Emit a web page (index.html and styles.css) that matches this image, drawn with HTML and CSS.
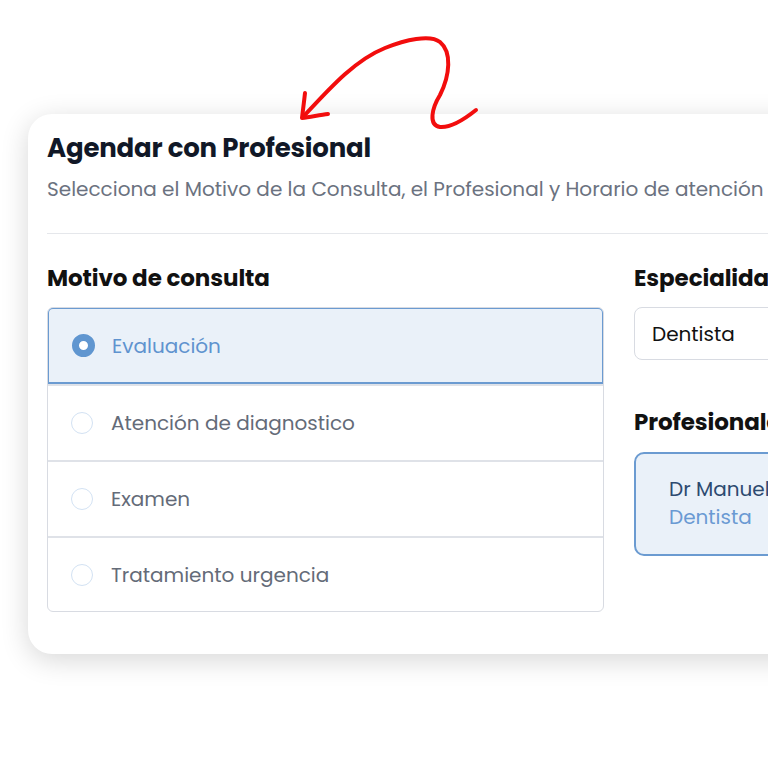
FILE: index.html
```html
<!DOCTYPE html>
<html lang="es">
<head>
<meta charset="utf-8">
<link rel="stylesheet" href="styles.css">
</head>
<body>
<div class="page">
  <div class="card">
    <h1 class="title">Agendar con Profesional</h1>
    <p class="subtitle">Selecciona el Motivo de la Consulta, el Profesional y Horario de atención</p>
    <hr class="divider">
    <div class="columns">
      <div class="col-left">
        <h2 class="section">Motivo de consulta</h2>
        <div class="list">
          <div class="row selected"><span class="radio on"></span><span class="label">Evaluación</span></div>
          <div class="row"><span class="radio"></span><span class="label">Atención de diagnostico</span></div>
          <div class="row"><span class="radio"></span><span class="label">Examen</span></div>
          <div class="row last"><span class="radio"></span><span class="label">Tratamiento urgencia</span></div>
        </div>
      </div>
      <div class="col-right">
        <h2 class="section">Especialidad</h2>
        <div class="select">Dentista</div>
        <h2 class="section pro-head">Profesionales</h2>
        <div class="pro-card">
          <div class="pro-name">Dr Manuel Pérez</div>
          <div class="pro-spec">Dentista</div>
        </div>
      </div>
    </div>
  </div>
  <svg class="arrow" width="768" height="140" viewBox="0 0 768 140" fill="none" stroke="#f20d0d" stroke-width="4" stroke-linecap="round" stroke-linejoin="round">
    <path d="M476 110 C 466 118, 452 128, 440 127 C 428 125, 432 108, 440 95 C 450 75, 452 52, 440 42 C 430 34, 405 40, 385 48 C 355 60, 330 88, 304 116"/>
    <path d="M305 93 C 304 102, 303 110, 302 118 C 310 117, 320 115, 328 114"/>
  </svg>
</div>
</body>
</html>
```
FILE: styles.css
```css
html, body {
  margin: 0;
  padding: 0;
  background: #ffffff;
  overflow: hidden;
}
.page {
  position: relative;
  width: 768px;
  height: 768px;
  overflow: hidden;
  padding-top: 114px;
  padding-left: 28px;
  box-sizing: border-box;
  font-family: "Poppins", "Open Sans", sans-serif;
}
.card {
  width: 1100px;
  height: 540px;
  box-sizing: border-box;
  background: #ffffff;
  border-radius: 24px;
  padding: 17px 19px;
  box-shadow: 0 6px 28px rgba(0, 0, 0, 0.16);
}
.title {
  margin: 0;
  font-size: 26px;
  font-weight: 700;
  color: #111827;
  line-height: 34px;
  letter-spacing: -0.2px;
}
.subtitle {
  margin: 10px 0 0;
  font-size: 20px;
  color: #6b7280;
  line-height: 28px;
  white-space: nowrap;
}
.divider {
  border: 0;
  border-top: 1px solid #e5e7eb;
  margin: 30px 0 0;
}
.columns {
  display: flex;
  gap: 30px;
  margin-top: 28px;
}
.col-left {
  width: 557px;
  flex: none;
}
.col-right {
  flex: 1;
}
.section {
  margin: 0;
  font-size: 23px;
  font-weight: 700;
  color: #111111;
  line-height: 32px;
  letter-spacing: -0.1px;
}
.list {
  margin-top: 13px;
  border: 1px solid #d8dbe2;
  border-radius: 6px;
  overflow: hidden;
}
.row {
  display: flex;
  align-items: center;
  height: 76px;
  padding-left: 23px;
  border-top: 2px solid #dfe2e8;
  box-sizing: border-box;
}
.row.last {
  height: 75px;
}
.row:first-child {
  border-top: 0;
}
.row.selected {
  background: #eaf1f9;
  border: 2px solid #6b9bd1;
  border-radius: 6px 6px 0 0;
  height: 77px;
  padding-left: 23px;
  margin: -1px -1px 0;
}
.radio {
  width: 22px;
  height: 22px;
  border-radius: 50%;
  border: 1px solid #d3e2f3;
  box-sizing: border-box;
  flex: none;
}
.radio.on {
  border: 7.5px solid #6096d0;
  background: #ffffff;
  width: 23px;
  height: 23px;
}
.label {
  margin-left: 18px;
  font-size: 20px;
  color: #646b78;
}
.selected .label {
  margin-left: 17px;
  color: #5f93cf;
}
.select {
  margin-top: 13px;
  height: 53px;
  border: 1px solid #d8dbe2;
  border-radius: 8px;
  display: flex;
  align-items: center;
  padding-left: 17px;
  font-size: 20px;
  color: #111111;
  box-sizing: border-box;
  white-space: nowrap;
}
.pro-head {
  margin-top: 46px;
  white-space: nowrap;
}
.pro-card {
  margin-top: 14px;
  height: 104px;
  border: 2px solid #6b9bd1;
  border-radius: 10px;
  background: #eaf1f9;
  box-sizing: border-box;
  padding: 21px 0 0 33px;
}
.pro-name {
  font-size: 20px;
  color: #2d4a70;
  line-height: 28px;
  white-space: nowrap;
}
.pro-spec {
  font-size: 20px;
  color: #6a9ad3;
  line-height: 28px;
}
.arrow {
  position: absolute;
  left: 0;
  top: 0;
}
```
